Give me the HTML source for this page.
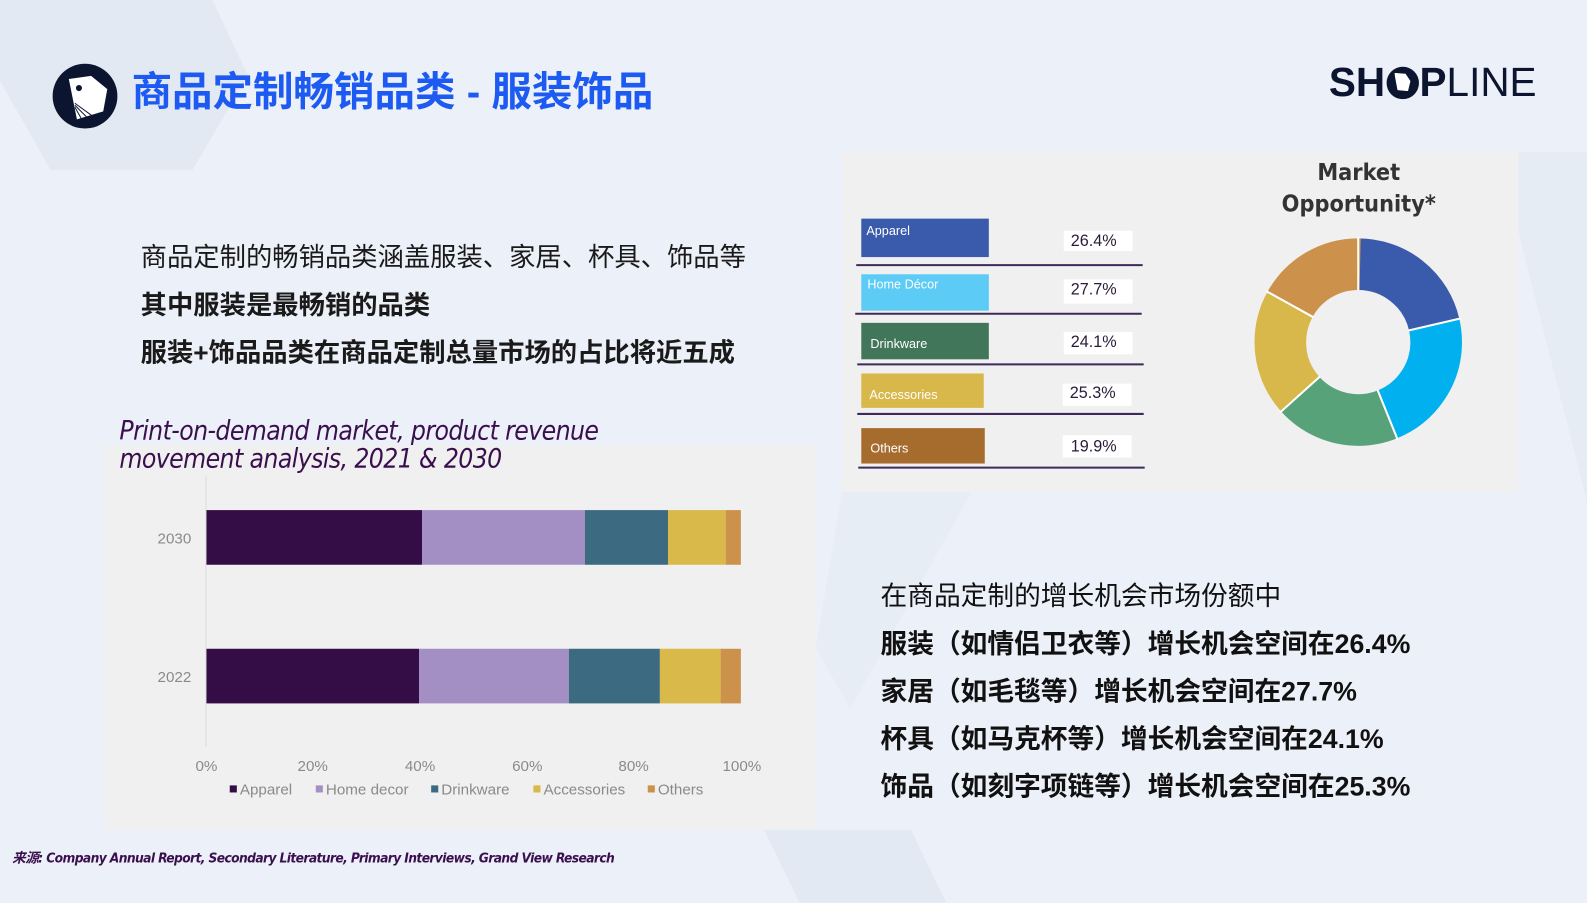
<!DOCTYPE html>
<html><head><meta charset="utf-8"><style>
*{margin:0;padding:0;box-sizing:border-box}
body{width:1587px;height:892px;overflow:hidden;background:#ecf0f8;position:relative;font-family:"Liberation Sans","Noto Sans CJK SC",sans-serif}
#w{position:absolute;left:0;top:0;width:1568px;height:882px;transform:scale(1.0121);transform-origin:0 0}
.abs{position:absolute}
.cn{font-family:"Liberation Sans","Noto Sans CJK SC",sans-serif;white-space:nowrap}
</style></head><body><div id="w">
<svg class="abs" style="left:0;top:0" width="1587" height="892">
<polygon points="0,0 210,0 245,75 190,168 50,168 0,80" fill="#e3e9f2"/>
<polygon points="1480,150 1587,150 1587,570" fill="#e3e9f2" opacity="0.6"/>
<polygon points="755,820 900,820 935,892 790,892" fill="#e3e9f2"/>
<polygon points="832,486 960,486 840,700 806,640" fill="#e6ebf4" opacity="0.7"/>
</svg>
<svg class="abs" style="left:50px;top:62px" width="68" height="66" viewBox="0 0 68 66">
<ellipse cx="34" cy="33" rx="32" ry="32" fill="#0c1530"/>
<path d="M18 16 L40 13 L56 26 L52 48 L26 56 Z" fill="#fff"/>
<circle cx="28" cy="25" r="3" fill="#0c1530"/>
<path d="M24 40 L46 56 M24 42 L40 58 M24 44 L32 58" stroke="#0c1530" stroke-width="1"/>
</svg>
<div class="abs cn" style="left:130px;top:67px;font-size:40px;font-weight:bold;color:#1d5af2;line-height:48px">商品定制畅销品类 - 服装饰品</div>
<div class="abs" style="left:1313px;top:60px;font-size:40px;color:#0c1530;line-height:44px"><b style="font-weight:900">SH</b><span style="display:inline-block;position:relative;width:32px;height:32px;border-radius:50%;background:#0c1530;vertical-align:-3px;margin:0 1px"><span style="position:absolute;left:8px;top:6px;width:16px;height:18px;background:#fff;clip-path:polygon(0 0,70% 5%,100% 45%,85% 100%,20% 95%)"></span></span><b style="font-weight:900">P</b><span style="font-weight:300">LINE</span></div>

<div class="abs cn" style="left:139px;top:231px;font-size:26px;color:#1a1a1a;line-height:47px">
商品定制的畅销品类涵盖服装、家居、杯具、饰品等<br><b>其中服装是最畅销的品类</b><br><b>服装+饰品品类在商品定制总量市场的占比将近五成</b></div>

<div class="abs" style="left:104px;top:440px;width:702px;height:380px;background:#f0f0f0"></div>
<div class="abs" style="left:118px;top:412px;font-size:26px;font-style:italic;color:#3a0f4e;line-height:28px;letter-spacing:-0.6px;white-space:nowrap;font-family:'DejaVu Sans Condensed','Liberation Sans',sans-serif">Print-on-demand market, product revenue<br>movement analysis, 2021 &amp; 2030</div>
<div class="abs" style="left:203px;top:470px;width:1px;height:268px;background:#dcdcdc"></div>
<svg class="abs" style="left:0;top:0" width="1587" height="892">
<rect x="204" y="504" width="213" height="54" fill="#350d46"/>
<rect x="417" y="504" width="161" height="54" fill="#a38fc4"/>
<rect x="578" y="504" width="82" height="54" fill="#3c6a80"/>
<rect x="660" y="504" width="57" height="54" fill="#d9b94a"/>
<rect x="717" y="504" width="15" height="54" fill="#cc914a"/>
<rect x="204" y="641" width="210" height="54" fill="#350d46"/>
<rect x="414" y="641" width="148" height="54" fill="#a38fc4"/>
<rect x="562" y="641" width="90" height="54" fill="#3c6a80"/>
<rect x="652" y="641" width="60" height="54" fill="#d9b94a"/>
<rect x="712" y="641" width="20" height="54" fill="#cc914a"/>
<g font-family="Liberation Sans" font-size="15" fill="#8a8a8a">
<text x="189" y="537" text-anchor="end">2030</text>
<text x="189" y="674" text-anchor="end">2022</text>
<text x="204" y="762" text-anchor="middle">0%</text>
<text x="309" y="762" text-anchor="middle">20%</text>
<text x="415" y="762" text-anchor="middle">40%</text>
<text x="521" y="762" text-anchor="middle">60%</text>
<text x="626" y="762" text-anchor="middle">80%</text>
<text x="733" y="762" text-anchor="middle">100%</text>
<rect x="227" y="776" width="7" height="7" fill="#350d46"/><text x="237" y="785">Apparel</text>
<rect x="312" y="776" width="7" height="7" fill="#a38fc4"/><text x="322" y="785">Home decor</text>
<rect x="426" y="776" width="7" height="7" fill="#3c6a80"/><text x="436" y="785">Drinkware</text>
<rect x="527" y="776" width="7" height="7" fill="#d9b94a"/><text x="537" y="785">Accessories</text>
<rect x="640" y="776" width="7" height="7" fill="#cc914a"/><text x="650" y="785">Others</text>
</g>
</svg>

<div class="abs" style="left:832px;top:150px;width:668px;height:336px;background:#f0f0f0"></div>
<div class="abs" style="left:1230px;top:156px;width:225px;text-align:center;font-size:23px;font-weight:bold;color:#333;line-height:31px;font-family:'DejaVu Sans Condensed','Liberation Sans',sans-serif">Market<br>Opportunity*</div>
<svg class="abs" style="left:0;top:0" width="1587" height="892">
<g font-family="Liberation Sans" font-size="12.5" fill="#fff">
<rect x="851" y="216" width="126" height="38" fill="#3a5aab"/><text x="856" y="232">Apparel</text>
<rect x="851" y="271" width="126" height="36" fill="#5ccbf5"/><text x="857" y="285">Home Décor</text>
<rect x="851" y="319" width="126" height="36" fill="#42765a"/><text x="860" y="344">Drinkware</text>
<rect x="851" y="369" width="121" height="34" fill="#d8b84a"/><text x="859" y="394">Accessories</text>
<rect x="851" y="423" width="122" height="35" fill="#a56c2e"/><text x="860" y="447">Others</text>
</g>
<g fill="#fff"><rect x="1051" y="228" width="68" height="20"/><rect x="1051" y="276" width="68" height="24"/><rect x="1051" y="328" width="68" height="22"/><rect x="1050" y="379" width="68" height="22"/><rect x="1050" y="430" width="68" height="22"/></g>
<g font-family="Liberation Sans" font-size="16" fill="#2a1b3a">
<text x="1058" y="243">26.4%</text><text x="1058" y="291">27.7%</text><text x="1058" y="343">24.1%</text><text x="1057" y="393">25.3%</text><text x="1058" y="446">19.9%</text>
</g>
<g stroke="#3d2a5a" stroke-width="2"><line x1="846" y1="262" x2="1129" y2="262"/><line x1="845" y1="310" x2="1128" y2="310"/><line x1="847" y1="360" x2="1130" y2="360"/><line x1="847" y1="409" x2="1130" y2="409"/><line x1="848" y1="462" x2="1131" y2="462"/></g>
<g transform="translate(1342 338) rotate(-90)" fill="none" stroke-width="51">
<circle r="77" stroke="#3a5aab" stroke-dasharray="103.5 400" stroke-dashoffset="0"/>
<circle r="77" stroke="#00b0ef" stroke-dasharray="108.9 400" stroke-dashoffset="-103.5"/>
<circle r="77" stroke="#57a279" stroke-dasharray="94.1 400" stroke-dashoffset="-212.4"/>
<circle r="77" stroke="#d8b84a" stroke-dasharray="95.4 400" stroke-dashoffset="-306.5"/>
<circle r="77" stroke="#cc914a" stroke-dasharray="82 400" stroke-dashoffset="-401.9"/>
</g>
<g transform="translate(1342 338)" stroke="#fff" stroke-width="2">
<line x1="0" y1="-51" x2="0" y2="-104"/>
<line x1="0" y1="-51" x2="0" y2="-104" transform="rotate(77)"/>
<line x1="0" y1="-51" x2="0" y2="-104" transform="rotate(158)"/>
<line x1="0" y1="-51" x2="0" y2="-104" transform="rotate(228)"/>
<line x1="0" y1="-51" x2="0" y2="-104" transform="rotate(299)"/>
</g>
</svg>

<div class="abs cn" style="left:870px;top:566px;font-size:26.4px;color:#111;line-height:47px">
在商品定制的增长机会市场份额中<br><b>服装（如情侣卫衣等）增长机会空间在26.4%</b><br><b>家居（如毛毯等）增长机会空间在27.7%</b><br><b>杯具（如马克杯等）增长机会空间在24.1%</b><br><b>饰品（如刻字项链等）增长机会空间在25.3%</b></div>

<div class="abs cn" style="left:12px;top:836px;font-size:13.5px;font-style:italic;font-weight:bold;color:#3a0f4e;letter-spacing:-0.6px;font-family:'DejaVu Sans Condensed','Liberation Sans','Noto Sans CJK SC',sans-serif">来源: Company Annual Report, Secondary Literature, Primary Interviews, Grand View Research</div>
</div></body></html>
